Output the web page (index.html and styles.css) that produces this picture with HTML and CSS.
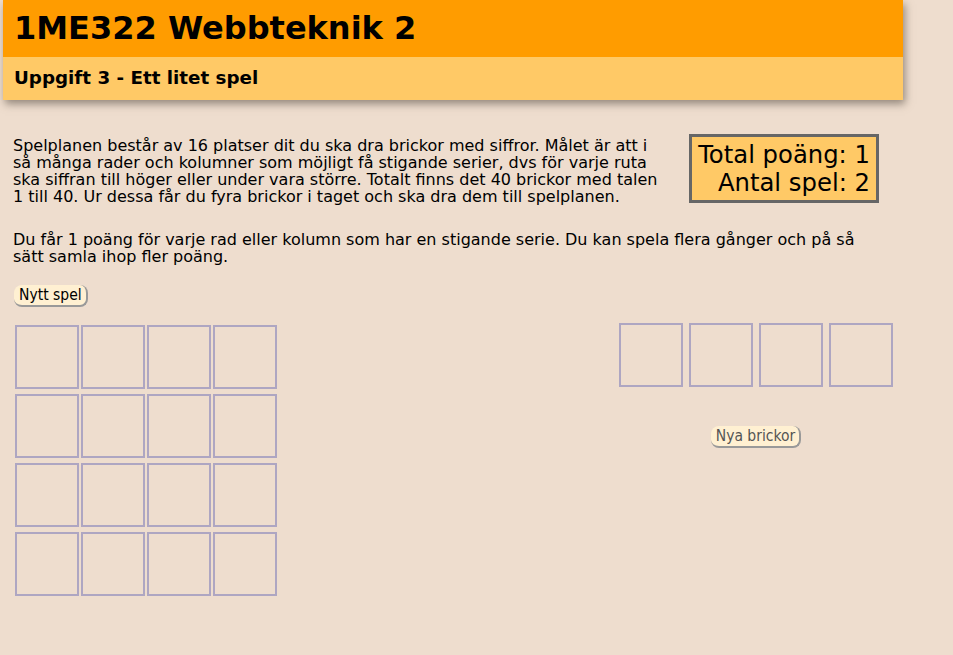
FILE: index.html
```html
<!DOCTYPE html>
<html lang="sv">
<head>
<meta charset="utf-8">
<title>1ME322 Webbteknik 2</title>
<link rel="stylesheet" href="styles.css">
</head>
<body>
<header class="header">
  <h1 class="title">1ME322 Webbteknik 2</h1>
  <h2 class="subtitle">Uppgift 3 - Ett litet spel</h2>
</header>
<main class="main">
  <div class="score">
    <div>Total poäng: 1</div>
    <div>Antal spel: 2</div>
  </div>
  <p class="text">Spelplanen består av 16 platser dit du ska dra brickor med siffror. Målet är att i så många rader och kolumner som möjligt få stigande serier, dvs för varje ruta ska siffran till höger eller under vara större. Totalt finns det 40 brickor med talen 1 till 40. Ur dessa får du fyra brickor i taget och ska dra dem till spelplanen.</p>
  <p class="text text-last">Du får 1 poäng för varje rad eller kolumn som har en stigande serie. Du kan spela flera gånger och på så sätt samla ihop fler poäng.</p>
  <button class="btn btn-new">Nytt spel</button>
  <div class="game">
    <div class="board">
      <div class="cell"></div><div class="cell"></div><div class="cell"></div><div class="cell"></div>
      <div class="cell"></div><div class="cell"></div><div class="cell"></div><div class="cell"></div>
      <div class="cell"></div><div class="cell"></div><div class="cell"></div><div class="cell"></div>
      <div class="cell"></div><div class="cell"></div><div class="cell"></div><div class="cell"></div>
    </div>
    <div class="tray">
      <div class="tiles">
        <div class="cell"></div><div class="cell"></div><div class="cell"></div><div class="cell"></div>
      </div>
      <button class="btn btn-tiles" disabled>Nya brickor</button>
    </div>
  </div>
</main>
</body>
</html>
```
FILE: styles.css
```css
html, body {
  margin: 0;
  padding: 0;
}
body {
  background: #eeddce;
  font-family: "DejaVu Sans", Verdana, sans-serif;
  color: #000;
}
.header {
  width: 900px;
  margin-left: 3px;
  box-shadow: 2px 4px 8px rgba(90, 80, 70, 0.6);
}
.title {
  margin: 0;
  background: #ff9c00;
  height: 57px;
  box-sizing: border-box;
  padding: 8px 0 0 11px;
  font-size: 32px;
  line-height: 40px;
  font-weight: bold;
}
.subtitle {
  margin: 0;
  background: #ffc966;
  height: 43px;
  box-sizing: border-box;
  padding: 10px 0 0 11px;
  font-size: 18.3px;
  line-height: 22px;
  font-weight: bold;
}
.main {
  width: 867px;
  padding: 34px 0 0 13px;
}
.score {
  float: right;
  margin: 0 1px 0 20px;
  background: #ffc966;
  border: 3px solid #666;
  padding: 4px 6px 3px 6px;
  text-align: right;
  font-size: 24.3px;
  line-height: 28px;
}
.text {
  margin: 3px 0 26px;
  font-size: 16px;
  line-height: 17px;
}
.text-last {
  margin-bottom: 20px;
}
.btn {
  display: block;
  font-family: "DejaVu Sans Condensed", "DejaVu Sans", sans-serif;
  font-size: 15.5px;
  line-height: 18px;
  padding: 1px 4px 1px 5px;
  background: #fff0d2;
  color: #000;
  border-style: solid;
  border-width: 0 2px 2px 0;
  border-color: #999;
  border-radius: 8px;
}
.btn-new {
  margin: 0 0 18px 1px;
}
.btn-tiles {
  color: #555;
  margin: 39px auto 0;
}
.game {
  display: flex;
  justify-content: space-between;
  align-items: flex-start;
}
.board {
  display: grid;
  grid-template-columns: repeat(4, 64px);
  grid-auto-rows: 64px;
  column-gap: 2px;
  row-gap: 5px;
  margin-left: 2px;
}
.cell {
  box-sizing: border-box;
  width: 64px;
  height: 64px;
  border: 2px solid #aea6c2;
}
.tray {
  margin-top: -2px;
  margin-right: -13px;
}
.tiles {
  display: flex;
  gap: 6px;
}
```
